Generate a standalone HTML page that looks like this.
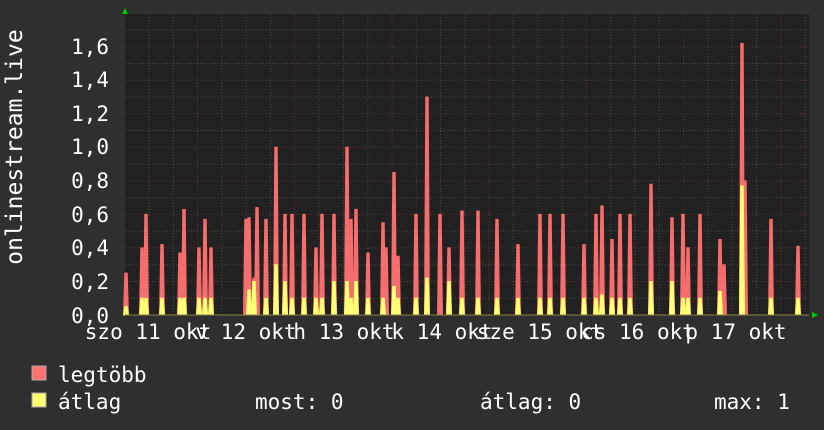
<!DOCTYPE html>
<html><head><meta charset="utf-8">
<style>
body{margin:0;background:#2f2f2f;width:824px;height:430px;overflow:hidden;font-family:"DejaVu Sans Mono","Liberation Mono",monospace;color:#fff}
svg{position:absolute;left:0;top:0}
</style></head><body>
<svg id="g" width="824" height="430" xmlns="http://www.w3.org/2000/svg" font-family="DejaVu Sans Mono, Liberation Mono, monospace">
<rect x="125" y="14" width="684" height="301" fill="#212121"/>
<g id="grid"></g>
<g id="data"></g>
<line x1="125" y1="315" x2="809" y2="315" fill="none" stroke="#8a8240" stroke-width="1"/>
<polygon points="122,14 128,14 125,8" fill="#00cc00"/>
<polygon points="812,312 812,318 818,315" fill="#00cc00"/>
<g fill="#fff" font-size="21" text-anchor="end">
<text x="109" y="54">1,6</text><text x="109" y="87">1,4</text><text x="109" y="121">1,2</text>
<text x="109" y="154">1,0</text><text x="109" y="188">0,8</text><text x="109" y="222">0,6</text>
<text x="109" y="255">0,4</text><text x="109" y="289">0,2</text><text x="109" y="323">0,0</text>
</g>
<text transform="translate(22,147) rotate(-90)" text-anchor="middle" fill="#fff" font-size="23">onlinestream.live</text>
<g id="xl" fill="#fff" font-size="21" text-anchor="middle"></g>
<rect x="32" y="366" width="14" height="14" fill="#ff7272" stroke="#aaa" stroke-width="1"/>
<rect x="32" y="393" width="14" height="14" fill="#ffff70" stroke="#aaa" stroke-width="1"/>
<g fill="#fff" font-size="21">
<text x="58" y="382">legtöbb</text>
<text x="58" y="409">átlag</text>
<text x="255" y="409">most: 0</text>
<text x="480" y="409">átlag: 0</text>
<text x="714" y="409">max: 1</text>
</g>
</svg>
<script>
var ns="http://www.w3.org/2000/svg";
function el(p,t,a){var e=document.createElementNS(ns,t);for(var k in a)e.setAttribute(k,a[k]);p.appendChild(e);return e;}
var grid=document.getElementById('grid');
var Y=function(v){return 315-v*167.7;};
for(var i=1;i<=17;i++){var y=Y(i*0.1);var maj=i%2==0;
el(grid,'line',{x1:125,x2:809,y1:y,y2:y,stroke:maj?'#6a3434':'#4a4a4a','stroke-dasharray':'1,2'});}
for(var x=149;x<809;x+=24.3){var k=Math.round((x-149)/24.3);var maj=(k%4==2);
el(grid,'line',{x1:x,x2:x,y1:14,y2:315,stroke:maj?'#6a3434':'#4a4a4a','stroke-dasharray':'1,2'});}
var red=[[126,.25],[142,.4],[146,.6],[162,.42],[180,.37],[184,.63],[199,.4],[205,.57],[211,.4],[246,.57],[249,.58],[254,.22],[257,.64],[266,.57],[276,1.0],[285,.6],[292,.6],[304,.6],[316,.4],[322,.6],[334,.6],[347,1.0],[351,.57],[356,.63],[368,.37],[383,.55],[386,.4],[394,.85],[398,.35],[416,.6],[427,1.3],[440,.6],[449,.4],[462,.62],[478,.62],[497,.57],[518,.42],[540,.6],[550,.6],[563,.6],[584,.42],[596,.6],[602,.65],[612,.45],[620,.6],[630,.6],[651,.78],[672,.58],[683,.6],[688,.4],[700,.6],[720,.45],[724,.3],[742,1.62],[745,.8],[771,.57],[798,.41]];
var yel=[[126,.05],[142,.1],[146,.1],[162,.1],[180,.1],[184,.1],[199,.1],[205,.1],[211,.1],[249,.15],[254,.2],[266,.1],[276,.3],[285,.2],[292,.1],[304,.1],[316,.1],[322,.1],[334,.2],[347,.2],[351,.1],[356,.2],[368,.1],[383,.1],[394,.17],[398,.1],[416,.1],[427,.22],[449,.2],[462,.1],[478,.1],[497,.1],[518,.1],[540,.1],[550,.1],[563,.1],[584,.1],[596,.1],[602,.12],[612,.1],[620,.1],[630,.1],[651,.2],[672,.2],[683,.1],[688,.1],[700,.1],[720,.14],[742,.77],[771,.1],[798,.1]];
var d=document.getElementById('data');
function draw(arr,fill,stroke){arr.forEach(function(p){var x=p[0],y=Y(p[1]);
el(d,'polygon',{points:(x-2.5)+',315 '+(x-1.2)+','+y+' '+(x+1.2)+','+y+' '+(x+2.5)+',315',fill:fill,stroke:stroke,'stroke-width':1});});}
draw(red,'#f07070','#ff6a6a');draw(yel,'#ffff80','#ffff60');
var xl=document.getElementById('xl');
var labs=["szo 11 okt","v 12 okt","h 13 okt","k 14 okt","sze 15 okt","cs 16 okt","p 17 okt"];
labs.forEach(function(s,i){var t=el(xl,'text',{x:148+98*i,y:339});t.textContent=s;});
</script>
</body></html>
